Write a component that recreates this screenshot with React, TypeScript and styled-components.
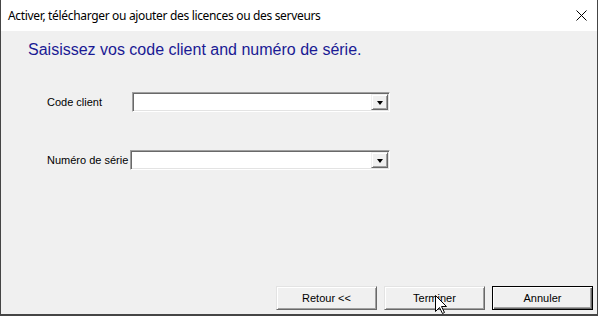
import React from "react";
import styled, { createGlobalStyle } from "styled-components";

const GlobalStyle = createGlobalStyle`
  html, body { margin: 0; padding: 0; background: #ffffff; }
  #root { width: 598px; height: 316px; }
  * { box-sizing: border-box; }
`;

const Window = styled.div`
  position: relative;
  width: 598px;
  height: 316px;
  border-left: 1px solid #454545;
  border-right: 1px solid #454545;
  border-bottom: 2px solid #454545;
  display: flex;
  flex-direction: column;
  font-family: "Liberation Sans", Arial, sans-serif;
  color: #000;
  overflow: hidden;
`;

const TitleBar = styled.div`
  height: 31px;
  flex-shrink: 0;
  background: #ffffff;
  display: flex;
  align-items: center;
  justify-content: space-between;
  padding-left: 7px;
  padding-right: 10px;
  font-family: "Noto Sans", "Liberation Sans", sans-serif;
  font-size: 12px;
  letter-spacing: -0.33px;
  color: #000;
`;

const Body = styled.div`
  flex: 1;
  background: #f0f0f0;
  display: flex;
  flex-direction: column;
`;

const Heading = styled.h1`
  margin: 0;
  padding: 10px 0 0 27px;
  font-family: "Liberation Sans", Arial, sans-serif;
  font-weight: normal;
  font-size: 16px;
  line-height: 18px;
  color: #1a1a94;
`;

const Form = styled.div`
  display: flex;
  flex-direction: column;
  gap: 38px;
  margin-top: 33px;
`;

const Row = styled.div`
  width: 389px;
  padding-left: 46px;
  display: flex;
  align-items: center;
  height: 20px;
`;

const Label = styled.label<{ $w: number }>`
  width: ${(p) => p.$w}px;
  flex-shrink: 0;
  font-size: 11px;
  white-space: nowrap;
`;

const Combo = styled.div`
  flex: 1;
  height: 20px;
  background: #ffffff;
  border: 1px solid;
  border-color: #a0a0a0 #ffffff #ffffff #a0a0a0;
  box-shadow: inset 1px 1px 0 #696969, inset -1px -1px 0 #e3e3e3;
  display: flex;
  justify-content: flex-end;
  padding: 1px;
`;

const DropButton = styled.div`
  width: 17px;
  height: 100%;
  background: #f0f0f0;
  border: 1px solid;
  border-color: #f0f0f0 #696969 #696969 #f0f0f0;
  box-shadow: inset 1px 1px 0 #ffffff, inset -1px -1px 0 #a0a0a0;
  display: flex;
  align-items: center;
  justify-content: center;
`;

const Arrow = styled.div`
  width: 0;
  height: 0;
  border-left: 3.5px solid transparent;
  border-right: 3.5px solid transparent;
  border-top: 4px solid #000;
  margin-top: 1px;
`;

const ButtonBar = styled.div`
  margin-top: auto;
  display: flex;
  justify-content: flex-end;
  gap: 7px;
  padding: 0 4px 4px 0;
`;

const Button = styled.button<{ $default?: boolean }>`
  width: 101px;
  height: 24px;
  padding: 0;
  margin: 0;
  background: #f0f0f0;
  font-family: "Liberation Sans", Arial, sans-serif;
  font-size: 11px;
  color: #000;
  border: 1px solid;
  border-color: ${(p) => (p.$default ? "#000 #000 #000 #000" : "#e3e3e3 #696969 #696969 #e3e3e3")};
  box-shadow: ${(p) =>
    p.$default
      ? "inset 1px 1px 0 #ffffff, inset -1px -1px 0 #696969, inset -2px -2px 0 #a0a0a0"
      : "inset 1px 1px 0 #ffffff, inset -1px -1px 0 #a0a0a0"};
  cursor: default;
`;

const Cursor = styled.svg`
  position: absolute;
  left: 434px;
  top: 295px;
  pointer-events: none;
`;

export default function App() {
  return (
    <>
      <GlobalStyle />
      <Window>
        <TitleBar>
          <span>Activer, télécharger ou ajouter des licences ou des serveurs</span>
          <svg width="11" height="11" viewBox="0 0 11 11">
            <path d="M0.5 0.5 L10.5 10.5 M10.5 0.5 L0.5 10.5" stroke="#000" strokeWidth="1" fill="none" />
          </svg>
        </TitleBar>
        <Body>
          <Heading>Saisissez vos code client and numéro de série.</Heading>
          <Form>
            <Row>
              <Label $w={85}>Code client</Label>
              <Combo>
                <DropButton>
                  <Arrow />
                </DropButton>
              </Combo>
            </Row>
            <Row>
              <Label $w={83}>Numéro de série</Label>
              <Combo>
                <DropButton>
                  <Arrow />
                </DropButton>
              </Combo>
            </Row>
          </Form>
          <ButtonBar>
            <Button>Retour &lt;&lt;</Button>
            <Button>Terminer</Button>
            <Button $default>Annuler</Button>
          </ButtonBar>
        </Body>
        <Cursor width="13" height="20" viewBox="0 0 13 20">
          <path
            d="M0.5 0.5 V16.5 L4.5 12.5 L7.5 18.5 L9.5 17.5 L6.5 11.5 H11.5 Z"
            fill="#fff"
            stroke="#000"
            strokeWidth="1"
            strokeLinejoin="miter"
          />
        </Cursor>
      </Window>
    </>
  );
}
